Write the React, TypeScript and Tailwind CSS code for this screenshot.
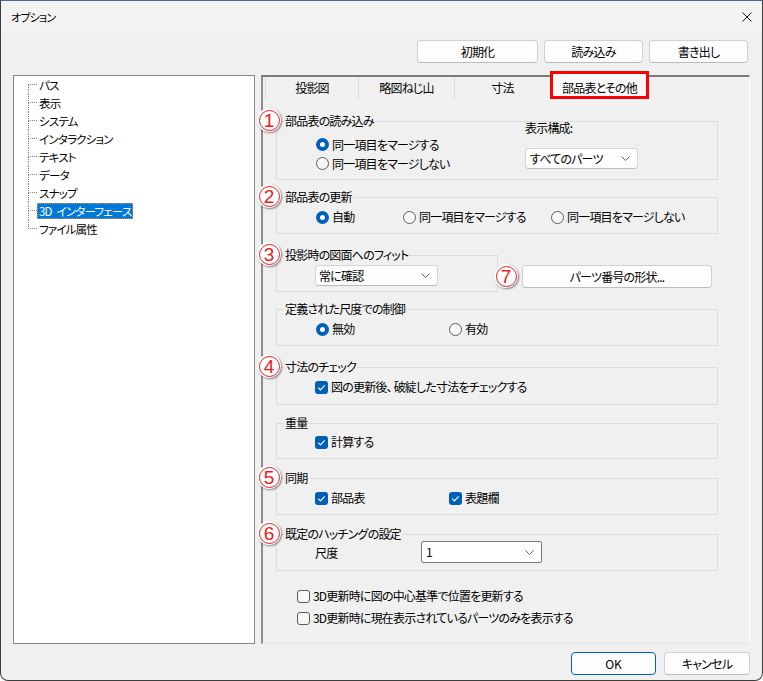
import React from 'react';

const Chevron: React.FC = () => (
  <svg width="9" height="5" viewBox="0 0 9 5" className="shrink-0">
    <polyline points="0.5,0.5 4.5,4.5 8.5,0.5" fill="none" stroke="#5f5f5f" strokeWidth="1" />
  </svg>
);

const Radio: React.FC<{ checked?: boolean; label: string; className?: string }> = ({ checked, label, className }) => (
  <div className={`flex items-center gap-[3px] h-4 ${className ?? ''}`}>
    {checked ? (
      <span className="w-[13px] h-[13px] rounded-full bg-[#005fb8] flex items-center justify-center shrink-0">
        <span className="w-[5px] h-[5px] rounded-full bg-white" />
      </span>
    ) : (
      <span className="w-[13px] h-[13px] rounded-full border border-[#5c5c5c] bg-[#f7f7f7] shrink-0" />
    )}
    <span>{label}</span>
  </div>
);

const Check: React.FC<{ checked?: boolean; label: string; className?: string }> = ({ checked, label, className }) => (
  <div className={`flex items-center gap-[3px] h-4 ${className ?? ''}`}>
    {checked ? (
      <span className="w-[13px] h-[13px] rounded-[3px] bg-[#005fb8] flex items-center justify-center shrink-0">
        <svg width="13" height="13" viewBox="0 0 13 13">
          <polyline points="3.3,6.7 5.4,8.8 9.7,4.4" fill="none" stroke="#ffffff" strokeWidth="1.2" />
        </svg>
      </span>
    ) : (
      <span className="w-[13px] h-[13px] rounded-[3px] border border-[#5c5c5c] bg-[#f7f7f7] shrink-0" />
    )}
    <span>{label}</span>
  </div>
);

const Badge: React.FC<{ n: string; className?: string }> = ({ n, className }) => (
  <div className={`w-[24px] h-[24px] rounded-full bg-white shadow-[1px_1px_2px_rgba(0,0,0,0.45)] flex items-center justify-center ${className ?? ''}`}>
    <div className="w-[21px] h-[21px] rounded-full border-[1.5px] border-[#ea1a22] flex items-center justify-center text-[#ea1a22] text-[19px] leading-none tracking-normal font-['Liberation_Sans',sans-serif]">
      {n}
    </div>
  </div>
);

const Group: React.FC<{ title: string; badge?: string; className?: string; children?: React.ReactNode }> = ({
  title,
  badge,
  className,
  children,
}) => (
  <div className={`relative border border-[#dcdcdc] ${className ?? ''}`}>
    <span className="absolute left-[7px] -top-[9px] px-[1px] bg-[#f0f0f0] leading-4 whitespace-nowrap">{title}</span>
    {badge && <Badge n={badge} className="absolute -left-[20px] -top-[14px]" />}
    {children}
  </div>
);

const treeItems = ['パス', '表示', 'システム', 'インタラクション', 'テキスト', 'データ', 'スナップ', '3D\u2002インターフェース', 'ファイル属性'];

const App: React.FC = () => {
  return (
    <div className="w-[763px] h-[681px] bg-[#f0f0f0] border border-[#3c3c3c] border-t-[#4a6896] rounded-b-[8px] overflow-hidden flex flex-col text-[12px] leading-4 tracking-[-0.8px] text-black font-['Noto_Sans_CJK_JP',sans-serif] [font-feature-settings:'palt']">
      {/* title bar */}
      <div className="h-[31px] shrink-0 bg-[#f3f3f3] flex items-center justify-between pl-[10px] pr-[10px]">
        <span className="text-[11px]">オプション</span>
        <svg width="10" height="10" viewBox="0 0 10 10">
          <line x1="0.5" y1="0.5" x2="9.5" y2="9.5" stroke="#1a1a1a" strokeWidth="1" />
          <line x1="9.5" y1="0.5" x2="0.5" y2="9.5" stroke="#1a1a1a" strokeWidth="1" />
        </svg>
      </div>

      {/* top buttons */}
      <div className="flex justify-end gap-[6px] mt-[8px] pr-[14px]">
        <button className="w-[121px] h-[23px] bg-[#fdfdfd] border border-[#d0d0d0] border-b-[#bdbdbd] rounded-[4px]">初期化</button>
        <button className="w-[99px] h-[23px] bg-[#fdfdfd] border border-[#d0d0d0] border-b-[#bdbdbd] rounded-[4px]">読み込み</button>
        <button className="w-[99px] h-[23px] bg-[#fdfdfd] border border-[#d0d0d0] border-b-[#bdbdbd] rounded-[4px]">書き出し</button>
      </div>

      {/* main */}
      <div className="flex mt-[12px] pl-[12px] gap-[6px] h-[569px] shrink-0">
        {/* tree */}
        <div className="w-[242px] border border-[#828790] bg-white pl-[14px] text-[11.5px]">
          {treeItems.map((item, i) => (
            <div key={item} className="flex h-[18px] items-center">
              <div className="w-[9px] self-stretch flex flex-col shrink-0">
                <div className={i === 0 ? 'h-[9px] border-b border-dotted border-[#808080]' : 'h-[9px] border-b border-l border-dotted border-[#808080]'} />
                <div className={i === treeItems.length - 1 ? 'flex-1' : 'flex-1 border-l border-dotted border-[#808080]'} />
              </div>
              <span
                className={
                  i === 7
                    ? 'px-[1px] leading-[14px] border border-dotted border-[#d98e2b] bg-[#0078d7] text-white whitespace-nowrap'
                    : 'px-[1px] leading-[14px] border border-transparent whitespace-nowrap'
                }
              >
                {item}
              </span>
            </div>
          ))}
        </div>

        {/* tab panel */}
        <div className="w-[489px] border-t-2 border-l-2 border-t-[#7c7c7c] border-l-[#8c8c8c] border-r border-b border-r-white border-b-[#e6e6e6] flex flex-col">
          <div className="flex h-[22px] ml-[2px] shrink-0">
            <div className="w-[94px] border-l border-r border-[#dadada] flex items-center justify-center">投影図</div>
            <div className="w-[96px] border-r border-[#dadada] flex items-center justify-center">略図ねじ山</div>
            <div className="w-[95px] flex items-center justify-center">寸法</div>
            <div className="w-[99px] h-[28px] -mt-[6px] border-[3px] border-[#ff0000] bg-[#f9f9f9] flex justify-center pt-[6px] relative">
              部品表とその他
            </div>
          </div>

          <div className="ml-[13px] flex flex-col">
            <Group title="部品表の読み込み" badge="1" className="w-[442px] h-[59px] mt-[22px]">
              <div className="flex items-start pl-[39px]">
                <div className="w-[209px] mt-[13px] flex flex-col">
                  <Radio checked label="同一項目をマージする" className="h-[19px]" />
                  <Radio label="同一項目をマージしない" className="h-[19px]" />
                </div>
                <div className="-mt-[2px] flex flex-col">
                  <span>表示構成:</span>
                  <div className="mt-[12px] w-[113px] h-[21px] bg-[#fdfdfd] border border-[#d5d5d5] border-b-[#bcbcbc] rounded-[4px] flex items-center justify-between pl-[4px] pr-[7px]">
                    <span>すべてのパーツ</span>
                    <Chevron />
                  </div>
                </div>
              </div>
            </Group>

            <Group title="部品表の更新" badge="2" className="w-[442px] h-[37px] mt-[17px]">
              <div className="flex pl-[39px] pt-[11px]">
                <Radio checked label="自動" className="w-[87px]" />
                <Radio label="同一項目をマージする" className="w-[148px]" />
                <Radio label="同一項目をマージしない" />
              </div>
            </Group>

            <div className="flex items-start mt-[21px]">
              <Group title="投影時の図面へのフィット" badge="3" className="w-[222px] h-[37px] shrink-0">
                <div className="pl-[38px] pt-[9px]">
                  <div className="w-[123px] h-[21px] bg-[#fdfdfd] border border-[#d5d5d5] border-b-[#bcbcbc] rounded-[4px] flex items-center justify-between pl-[3px] pr-[7px]">
                    <span>常に確認</span>
                    <Chevron />
                  </div>
                </div>
              </Group>
              <Badge n="7" className="-ml-[4px] mt-[9px] relative shrink-0" />
              <button className="ml-[4px] mt-[10px] w-[190px] h-[23px] bg-[#fdfdfd] border border-[#d0d0d0] border-b-[#bdbdbd] rounded-[4px]">
                パーツ番号の形状...
              </button>
            </div>

            <Group title="定義された尺度での制御" className="w-[442px] h-[37px] mt-[17px]">
              <div className="flex pl-[39px] pt-[11px]">
                <Radio checked label="無効" className="w-[133px]" />
                <Radio label="有効" />
              </div>
            </Group>

            <Group title="寸法のチェック" badge="4" className="w-[442px] h-[38px] mt-[21px]">
              <div className="pl-[38px] pt-[11px]">
                <Check checked label="図の更新後、 破綻した寸法をチェックする" />
              </div>
            </Group>

            <Group title="重量" className="w-[442px] h-[36px] mt-[18px]">
              <div className="pl-[38px] pt-[10px]">
                <Check checked label="計算する" />
              </div>
            </Group>

            <Group title="同期" badge="5" className="w-[442px] h-[37px] mt-[19px]">
              <div className="flex pl-[38px] pt-[11px]">
                <Check checked label="部品表" className="w-[134px]" />
                <Check checked label="表題欄" />
              </div>
            </Group>

            <Group title="既定のハッチングの設定" badge="6" className="w-[442px] h-[37px] mt-[19px]">
              <div className="flex items-center pl-[38px] pt-[6px]">
                <span className="w-[106px] mt-[2px]">尺度</span>
                <div className="w-[121px] h-[22px] bg-white border border-[#7a7a7a] rounded-[2px] flex items-center justify-between pl-[4px] pr-[7px]">
                  <span>1</span>
                  <Chevron />
                </div>
              </div>
            </Group>
          </div>

          <div className="ml-[34px] mt-[17px] flex flex-col gap-[6px]">
            <Check label="3D更新時に図の中心基準で位置を更新する" />
            <Check label="3D更新時に現在表示されているパーツのみを表示する" />
          </div>
        </div>
      </div>

      {/* bottom buttons */}
      <div className="flex justify-end gap-[8px] mt-[8px] pr-[12px]">
        <button className="w-[85px] h-[23px] bg-[#fdfdfd] border-[1.5px] border-[#005fb8] rounded-[4px] tracking-normal">OK</button>
        <button className="w-[86px] h-[23px] bg-[#fdfdfd] border border-[#d0d0d0] border-b-[#bdbdbd] rounded-[4px]">キャンセル</button>
      </div>
    </div>
  );
};

export default App;
